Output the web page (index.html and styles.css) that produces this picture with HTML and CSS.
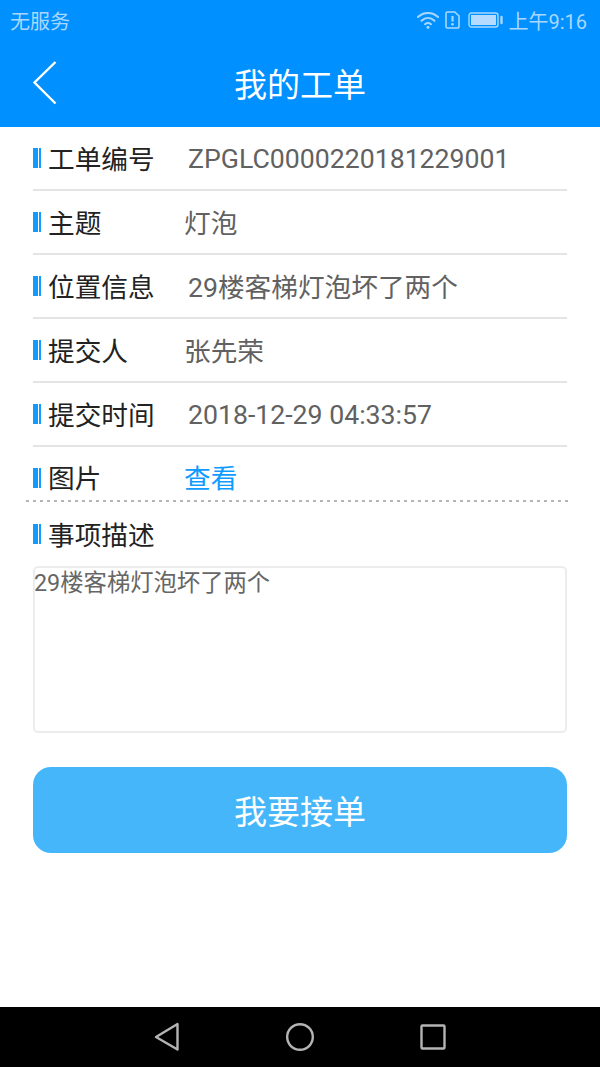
FILE: index.html
```html
<!DOCTYPE html>
<html lang="zh-CN">
<head>
  <meta charset="UTF-8" />
  <meta name="viewport" content="width=device-width, initial-scale=1.0"/>
  <title>我的工单</title>
  <link rel="stylesheet" href="styles.css">
</head>
<body>

<div class="phone">
  <!-- Status bar + title -->
  <header class="top">
    <div class="status">
      <span class="carrier">无服务</span>
      <div class="status-right">
        <svg class="ic-wifi" width="22" height="18" viewBox="0 0 22 18" fill="none" stroke="#a9d8ff" stroke-width="2" stroke-linecap="round">
          <path d="M1 6C6.5 0.5 15.5 0.5 21 6"/>
          <path d="M4.5 9.8C8.5 6 13.5 6 17.5 9.8"/>
          <path d="M8 13.2C10 11.6 12 11.6 14 13.2"/>
          <circle cx="11" cy="16.2" r="1.5" fill="#a9d8ff" stroke="none"/>
        </svg>
        <svg class="ic-sim" width="15" height="18" viewBox="0 0 15 18" fill="none">
          <path d="M2.5 1H9.8L14 5V15.5A1.5 1.5 0 0 1 12.5 17H2.5A1.5 1.5 0 0 1 1 15.5V2.5A1.5 1.5 0 0 1 2.5 1Z" stroke="#a9d8ff" stroke-width="1.6"/>
          <path d="M7.5 5V10.5" stroke="#a9d8ff" stroke-width="2.2"/>
          <circle cx="7.5" cy="13.2" r="1.3" fill="#a9d8ff"/>
        </svg>
        <svg class="ic-batt" width="35" height="16" viewBox="0 0 35 16" fill="none">
          <rect x="1" y="1" width="29" height="14" rx="2.5" stroke="#a9d8ff" stroke-width="1.4"/>
          <rect x="3" y="3" width="25" height="10" fill="#b5dcff"/>
          <path d="M33.5 5V11" stroke="#a9d8ff" stroke-width="2.4" stroke-linecap="round"/>
        </svg>
        <span class="clock">上午9:16</span>
      </div>
    </div>
    <div class="titlebar">
      <svg class="back" width="26" height="46" viewBox="0 0 26 46" fill="none" stroke="#fff" stroke-width="2.4">
        <path d="M23.5 2L2.5 22.5L23.5 43.5"/>
      </svg>
      <h1>我的工单</h1>
    </div>
  </header>

  <main class="content">
    <div class="row">
      <span class="mark"></span><span class="label">工单编号</span><span class="value shifted latin">ZPGLC0000220181229001</span>
    </div>
    <div class="row">
      <span class="mark"></span><span class="label">主题</span><span class="value">灯泡</span>
    </div>
    <div class="row">
      <span class="mark"></span><span class="label">位置信息</span><span class="value shifted">29楼客梯灯泡坏了两个</span>
    </div>
    <div class="row">
      <span class="mark"></span><span class="label">提交人</span><span class="value">张先荣</span>
    </div>
    <div class="row">
      <span class="mark"></span><span class="label">提交时间</span><span class="value shifted latin">2018-12-29 04:33:57</span>
    </div>
    <div class="row row-pic">
      <span class="mark"></span><span class="label">图片</span><a class="value link">查看</a>
    </div>

    <div class="desc-head">
      <span class="mark"></span><span class="label">事项描述</span>
    </div>
    <div class="desc-box">29楼客梯灯泡坏了两个</div>

    <button class="accept">我要接单</button>
  </main>

  <!-- Android nav -->
  <nav class="navbar">
    <svg width="26" height="30" viewBox="0 0 26 30" fill="none" stroke="#b4b4b4" stroke-width="2.4" stroke-linejoin="round">
      <path d="M23.5 2V27.5L2 15Z"/>
    </svg>
    <svg width="30" height="30" viewBox="0 0 30 30" fill="none" stroke="#b4b4b4" stroke-width="2.4">
      <circle cx="15" cy="15" r="12.8"/>
    </svg>
    <svg width="26" height="26" viewBox="0 0 26 26" fill="none" stroke="#b4b4b4" stroke-width="2.4" stroke-linejoin="round">
      <rect x="1.5" y="1.5" width="23" height="23" rx="1"/>
    </svg>
  </nav>
</div>

</body>
</html>
```

FILE: styles.css
```css
* { box-sizing: border-box; }
body {
  margin: 0;
  font-family: Roboto, 'Noto Sans CJK SC', sans-serif;
  background: #fff;
}
.phone {
  width: 600px;
  height: 1067px;
  display: flex;
  flex-direction: column;
  overflow: hidden;
}
.top {
  background: #0090ff;
  height: 127px;
  flex-shrink: 0;
}
.status {
  height: 42px;
  padding: 0 13px 2px 10px;
  display: flex;
  justify-content: space-between;
  align-items: center;
  color: #a9d8ff;
  font-size: 20px;
}
.status-right {
  display: flex;
  align-items: center;
}
.status-right svg { margin-bottom: 1px; }
.ic-wifi { margin-right: 6px; }
.ic-sim { margin-right: 8px; }
.ic-batt { margin-right: 5px; }
.titlebar {
  height: 85px;
  padding-bottom: 4px;
  position: relative;
  display: flex;
  align-items: center;
  justify-content: center;
}
.titlebar h1 {
  margin: 0;
  color: #fff;
  font-size: 33px;
  font-weight: 400;
}
.back {
  position: absolute;
  left: 32px;
  top: 18px;
}
.content {
  flex: 1;
  padding: 0 33px;
}
.row {
  height: 64px;
  display: flex;
  align-items: center;
  border-bottom: 2px solid #e4e4e4;
}
.row-pic {
  height: 55px;
  padding: 6px 4px 0 7px;
  margin: 0 -4px 0 -7px;
  border-bottom: none;
  background: repeating-linear-gradient(90deg, #b5b5b5 0 3px, transparent 3px 7px) left bottom / 100% 2px no-repeat;
}
.mark {
  width: 8px;
  height: 20px;
  flex-shrink: 0;
  border-left: 5px solid #0f9bff;
  border-right: 2px solid #0f9bff;
}
.label {
  width: 143px;
  padding-left: 7px;
  padding-bottom: 2px;
  font-size: 26.67px;
  color: #222;
  flex-shrink: 0;
}
.value {
  padding-bottom: 2px;
  font-size: 26.67px;
  color: #616161;
}
.value.shifted { margin-left: 4px; }
.value.latin {
  padding-top: 2px;
  padding-bottom: 0;
}
.link { color: #0f9bff; }
.desc-head {
  height: 64px;
  display: flex;
  align-items: center;
}
.desc-box {
  height: 167px;
  border: 2px solid #ececec;
  border-radius: 5px;
  font-size: 23.33px;
  line-height: 30px;
  text-indent: -1px;
  color: #666;
}
.accept {
  display: block;
  width: 100%;
  height: 86px;
  margin-top: 34px;
  padding-bottom: 2px;
  border: none;
  border-radius: 18px;
  background: #46b6fa;
  color: #fff;
  font-family: inherit;
  font-size: 33px;
}
.navbar {
  height: 60px;
  flex-shrink: 0;
  background: #000;
  display: flex;
  align-items: center;
  padding: 0 154px;
  justify-content: space-between;
}
```
